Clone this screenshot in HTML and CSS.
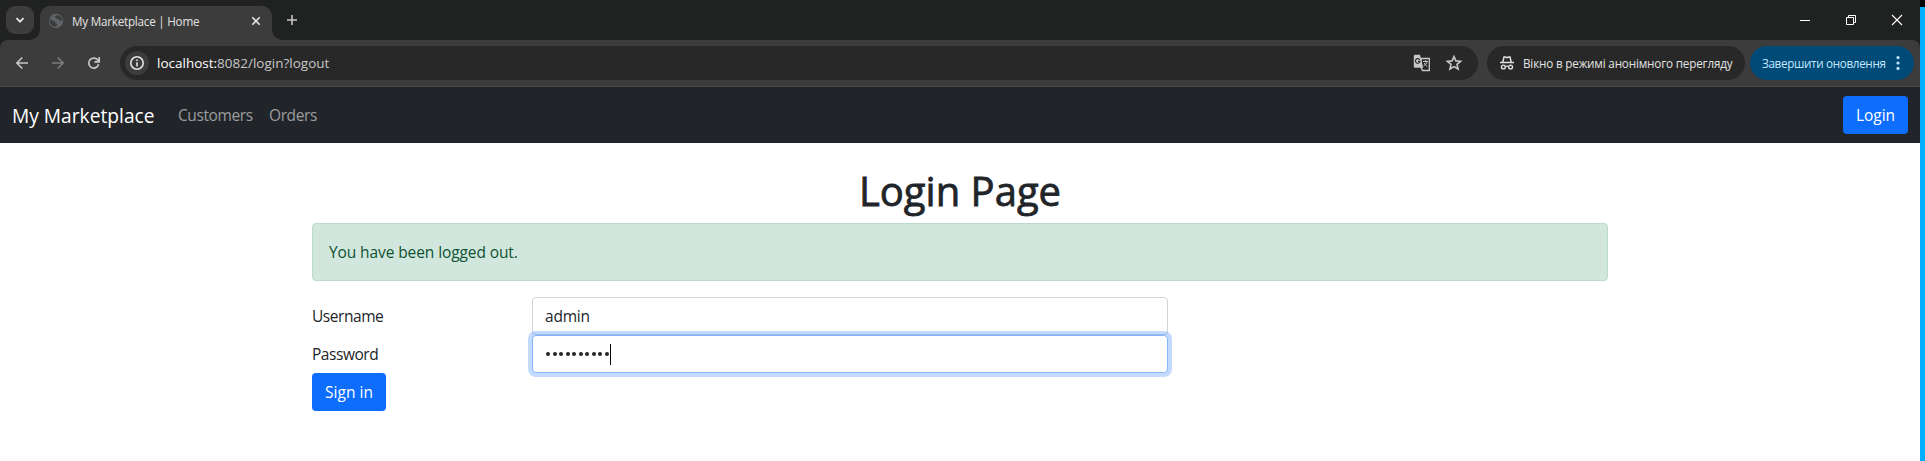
FILE: index.html
```html
<!DOCTYPE html>
<html lang="uk">
<head>
<meta charset="utf-8">
<title>My Marketplace | Home</title>
<link rel="stylesheet" href="styles.css">
</head>
<body>
<div class="screen">
  <div class="window">
    <div class="tabstrip">
      <div class="tab-search"><svg width="28" height="28" viewBox="0 0 28 28"><path d="M10.5 12.2 14 15.7l3.5-3.5" fill="none" stroke="#e3e3e3" stroke-width="1.9"/></svg></div>
      <div class="tab">
        <svg class="favicon" width="16" height="16" viewBox="0 0 16 16"><circle cx="8" cy="8" r="7.2" fill="#5f6368"/><path d="M2 5.6c1.500 2.400 3.200 2 4.400 2.600s.6 2 2 2.400 1 1.600-.6 3.200C4.500 14 2 11.500 1.600 8zM8.600 2.300c-2 .8-1.800 2.400-.4 2.900s2.200.3 2.600 1.600 2.200.8 3.400.6C14 4.500 11.500 2.200 8.600 2.300z" fill="#3c3c3c"/></svg>
        <span class="tab-title"><span class="t">My Marketplace | Home</span></span>
        <svg class="tab-close" width="10" height="10" viewBox="0 0 10 10"><path d="M1.300 1.300l7.400 7.400M8.700 1.300 1.300 8.700" stroke="#e3e3e3" stroke-width="1.600"/></svg>
      </div>
      <svg class="tab-new" width="12" height="12" viewBox="0 0 12 12"><path d="M6 1v10M1 6h10" stroke="#c7c7c7" stroke-width="1.600"/></svg>
      <div class="controls">
        <svg width="46" height="40" viewBox="0 0 46 40"><path d="M18 20.500h10" stroke="#fff"/></svg>
        <svg width="46" height="40" viewBox="0 0 46 40"><path d="M18.500 17.500h7v7h-7zM20.500 17.500v-2h7v7h-2" fill="none" stroke="#fff"/></svg>
        <svg width="46" height="40" viewBox="0 0 46 40"><path d="M18 15l10 10M28 15 18 25" stroke="#fff" stroke-width="1.100"/></svg>
      </div>
    </div>
    <div class="toolbar">
      <svg class="nav-icon" width="36" height="36" viewBox="0 0 36 36"><path d="M24 18H13M18.300 12.500 12.800 18l5.500 5.500" fill="none" stroke="#c7c7c7" stroke-width="1.600"/></svg>
      <svg class="nav-icon" width="36" height="36" viewBox="0 0 36 36"><path d="M12 18h11M17.700 12.500l5.500 5.500-5.500 5.500" fill="none" stroke="#7c7c7c" stroke-width="1.600"/></svg>
      <svg class="nav-icon" width="36" height="36" viewBox="0 0 36 36"><path d="M22.600 19.300a5 5 0 1 1-.6-3.900l.8 1.100M23.200 12v4.800h-4.800" fill="none" stroke="#c7c7c7" stroke-width="1.700"/></svg>
      <div class="omnibox">
        <div class="site-info"><svg width="24" height="24" viewBox="0 0 24 24"><circle cx="12" cy="12" r="6.200" fill="none" stroke="#e3e3e3" stroke-width="1.600"/><path d="M12 11.200v4.200M12 8.500v1.600" stroke="#e3e3e3" stroke-width="1.600"/></svg></div>
        <span class="url"><span class="t host">localhost:</span><span class="t rest">8082/login?logout</span></span>
        <svg class="translate" width="18" height="18" viewBox="0 0 18 18"><path d="M8 4.500h8.300v12H9.500L8 13z" fill="none" stroke="#c7c7c7" stroke-width="1.300"/><path d="M2 .8h5l3.200 13H2A1.200 1.200 0 0 1 .8 12.600V2A1.200 1.200 0 0 1 2 .8z" fill="#c7c7c7"/><path d="M6.700 5.700A2.300 2.300 0 1 0 7 7.400H5" fill="none" stroke="#292929" stroke-width="1.100"/><path d="M10 7.500h5M12.500 6.200v1.300M14 7.500c-.4 2-1.800 3.400-3.400 4.500M11.300 9c.6 1.500 1.600 2.600 3 3.500" fill="none" stroke="#c7c7c7" stroke-width="1"/></svg>
        <svg class="star" width="18" height="18" viewBox="0 0 18 18"><path d="M9 2.600l1.900 4.300 4.700.4-3.600 3.100 1.100 4.600L9 12.600 4.900 15 6 10.400 2.400 7.300l4.700-.4z" fill="none" stroke="#c7c7c7" stroke-width="1.600"/></svg>
      </div>
      <div class="incognito">
        <svg width="16" height="16" viewBox="0 0 16 16"><path d="M1 7.600h14M3.800 7.200 5 2h1.400l1.600.6L9.600 2H11l1.200 5.200" fill="none" stroke="#e3e3e3" stroke-width="1.500"/><circle cx="4.400" cy="12" r="1.900" fill="none" stroke="#e3e3e3" stroke-width="1.400"/><circle cx="11.600" cy="12" r="1.900" fill="none" stroke="#e3e3e3" stroke-width="1.400"/><path d="M6.300 11.600q1.700-.8 3.400 0" fill="none" stroke="#e3e3e3" stroke-width="1.200"/></svg>
        <span class="t">Вікно в режимі анонімного перегляду</span>
      </div>
      <div class="update">
        <span class="t">Завершити оновлення</span>
        <svg width="4" height="16" viewBox="0 0 4 16"><circle cx="2" cy="2.600" r="1.600"/><circle cx="2" cy="8" r="1.600"/><circle cx="2" cy="13.400" r="1.600"/></svg>
      </div>
    </div>
    <nav class="navbar">
      <span class="brand"><span class="t">My Marketplace</span></span>
      <a class="nav-link customers"><span class="t">Customers</span></a>
      <a class="nav-link orders"><span class="t">Orders</span></a>
      <button class="btn btn-login"><span class="t">Login</span></button>
    </nav>
    <main class="container">
      <h1><span class="t">Login Page</span></h1>
      <div class="alert"><span class="t">You have been logged out.</span></div>
      <form>
        <div class="row"><label><span class="t">Username</span></label><div class="input"><span class="t">admin</span></div></div>
        <div class="row"><label><span class="t">Password</span></label><div class="input focus"><span class="dots"><i></i><i></i><i></i><i></i><i></i><i></i><i></i><i></i><i></i><i></i></span><span class="caret"></span></div></div>
        <button type="button" class="btn btn-sign"><span class="t">Sign in</span></button>
      </form>
    </main>
  </div>
  <div class="edge"></div>
</div>
</body>
</html>
```

FILE: styles.css
```css
* { box-sizing: border-box; }
body { margin: 0; font: 15.5px/24px "Open Sans", "Noto Sans", sans-serif; color: #212529; background: #fff; overflow: hidden; }
svg { display: block; flex: none; }
.t { white-space: nowrap; }
.screen { display: flex; width: 1925px; height: 461px; }
.window { width: 1920px; background: #202221; }
.edge { width: 5px; background: #00adff; border-top: 7px solid #000; }

.tabstrip { display: flex; height: 40px; background: #202221; padding-left: 6px; }
.tab-search { width: 28px; height: 28px; margin-top: 6px; border-radius: 9px; background: #3c3c3c; }
.tab { position: relative; display: flex; align-items: center; width: 232px; height: 34px; margin: 6px 0 0 6px; padding: 0 11px 5px 8px; border-radius: 10px 10px 0 0; background: #3c3c3c; }
.tab::before, .tab::after { content: ""; position: absolute; bottom: 0; width: 10px; height: 10px; }
.tab::before { left: -10px; background: radial-gradient(circle at 0 0, transparent 9.5px, #3c3c3c 10px); }
.tab::after { right: -10px; background: radial-gradient(circle at 100% 0, transparent 9.5px, #3c3c3c 10px); }
.tab-title { flex: 1; margin-left: 8px; font-size: 11.7px; letter-spacing: -.24px; color: #e3e3e3; }
.tab-new { margin: 14px 0 0 14px; }
.controls { display: flex; margin-left: auto; }

.toolbar { display: flex; align-items: center; height: 47px; padding: 0 6px 1px 4px; background: #3c3c3c; border-bottom: 1px solid #4a4a4a; border-radius: 8px 8px 0 0; }
.omnibox { display: flex; align-items: center; width: 1358px; height: 34px; margin-left: 8px; padding: 0 15px 0 5px; border-radius: 17px; background: #282828; }
.site-info { width: 24px; height: 24px; border-radius: 50%; background: #3c3c3c; }
.url { flex: 1; margin-left: 8px; font-size: 13.5px; color: #c7c7c7; }
.host { color: #fff; }
.star { margin-left: 14px; }
.incognito, .update { display: flex; align-items: center; height: 34px; border-radius: 17px; font-size: 11.7px; color: #e3e3e3; }
.incognito { width: 258px; margin-left: 9px; padding-left: 12px; gap: 8px; letter-spacing: -.18px; background: #282828; }
.update { width: 164px; margin-left: 5px; padding: 0 14px 0 12px; justify-content: space-between; letter-spacing: -.35px; background: #004a77; color: #c2e7ff; fill: #c2e7ff; }

.navbar { display: flex; align-items: center; height: 56px; padding: 0 12px; background: #212529; }
.brand { width: 158px; font-size: 19.2px; padding-top: 1px; color: #fff; }
.nav-link { padding: 0 8px; letter-spacing: -.4px; color: #9b9d9e; }
.customers { width: 91px; }
.btn { display: block; height: 38px; padding: 0; border: 0; border-radius: 4px; background: #0d6efd; color: #fff; font: inherit; text-align: center; }
.btn-login { width: 65px; margin-left: auto; }

.container { height: 318px; padding: 24px 312px 0; background: #fff; }
h1 { margin: 0 0 8px; font-size: 40px; line-height: 48px; font-weight: 400; text-align: center; -webkit-text-stroke: .8px #212529; }
.alert { height: 58px; margin-bottom: 16px; padding: 16px; border: 1px solid #badbcc; border-radius: 4px; background: #d1e7dd; color: #0f5132; letter-spacing: -.1px; }
.row { display: flex; height: 38px; align-items: center; }
label { width: 220px; letter-spacing: -.45px; }
.input { display: flex; align-items: center; width: 636px; height: 38px; padding-left: 12px; border: 1px solid #ced4da; border-radius: 4px; background: #fff; letter-spacing: -.2px; }
.focus { border-color: #86b7fe; box-shadow: 0 0 0 4px rgba(13, 110, 253, .25); }
.dots { display: flex; gap: 2.5px; margin-left: 1px; }
.dots i { width: 4px; height: 4px; border-radius: 50%; background: #212529; }
.caret { width: 1px; height: 21px; margin-left: 1px; background: #000; }
.btn-sign { width: 74px; }
```
